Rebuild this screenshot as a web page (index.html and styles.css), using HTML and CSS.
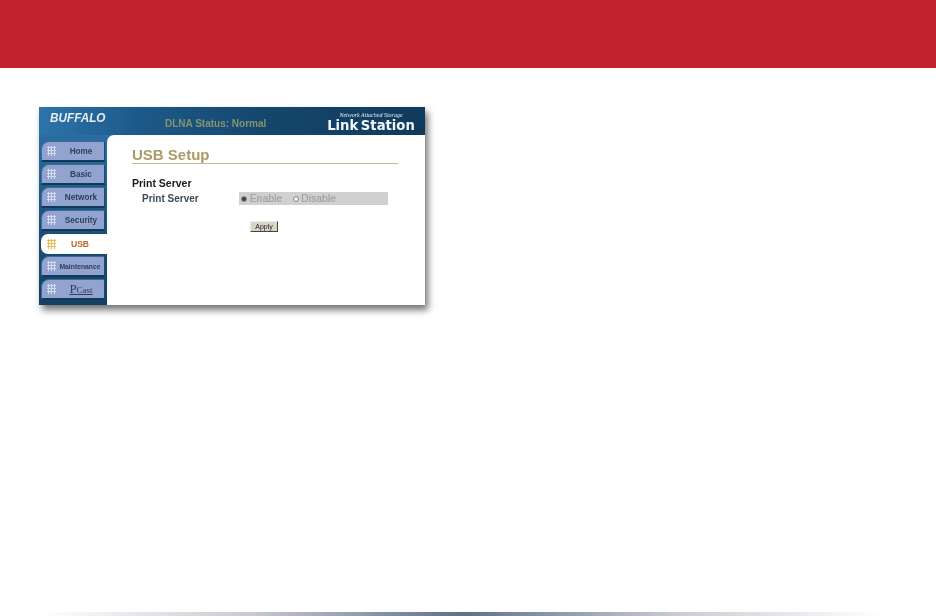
FILE: index.html
```html
<!DOCTYPE html>
<html lang="en">
<head>
<meta charset="utf-8">
<title>USB Setup</title>
<link rel="stylesheet" href="styles.css">
</head>
<body>
<div class="band"></div>
<main class="main">
  <div class="shot">
    <header class="top">
      <div class="logo"><span class="logo-text">BUFFALO</span></div>
      <div class="status">DLNA Status: Normal</div>
      <div class="brand">
        <span class="brand-sub">Network Attached Storage</span>
        <span class="brand-name">Link Station</span>
      </div>
    </header>
    <div class="body">
      <nav class="side">
        <a class="tab"><span class="dots"></span><span class="lbl">Home</span></a>
        <a class="tab"><span class="dots"></span><span class="lbl">Basic</span></a>
        <a class="tab"><span class="dots"></span><span class="lbl">Network</span></a>
        <a class="tab"><span class="dots"></span><span class="lbl">Security</span></a>
        <a class="tab active"><span class="dots"></span><span class="lbl">USB</span></a>
        <a class="tab"><span class="dots"></span><span class="lbl small">Maintenance</span></a>
        <a class="tab"><span class="dots"></span><span class="lbl pcast"><span class="pcast-p">P</span>Cast</span></a>
      </nav>
      <section class="content">
        <h1 class="title">USB Setup</h1>
        <h2 class="sub">Print Server</h2>
        <div class="row">
          <span class="rowlbl">Print Server</span>
          <div class="opts">
            <span class="radio on"></span><span class="opt">Enable</span>
            <span class="radio second"></span><span class="opt">Disable</span>
          </div>
        </div>
        <div class="apply"><span class="btn">Apply</span></div>
      </section>
    </div>
  </div>
</main>
<div class="foot"></div>
</body>
</html>
```
FILE: styles.css
```css
html, body { margin: 0; padding: 0; background: #fff; }
body { width: 936px; height: 616px; overflow: hidden; display: flex; flex-direction: column; font-family: "Liberation Sans", Arial, sans-serif; }
.band { height: 68px; background: #c2222d; flex: none; }
.main { flex: 1; padding: 39px 0 0 39px; }
.shot { width: 386px; height: 198px; display: flex; flex-direction: column; box-shadow: 3px 5px 7px rgba(0,0,0,.55); filter: blur(.45px); background: #14466c; }
.top { height: 28px; flex: none; display: flex; align-items: center; background: linear-gradient(90deg, #2e74aa 0%, #1d5a8a 25%, #14466c 60%, #103a5c 100%); color: #fff; }
.logo { width: 126px; padding-left: 11px; box-sizing: border-box; margin-top: -8px; }
.logo-text { display: inline-block; font-weight: bold; font-style: italic; font-size: 13.5px; color: #e6eef6; transform: scaleX(.87); transform-origin: left center; }
.status { font-size: 10px; font-weight: bold; color: #87936c; width: 160px; margin-top: 5px; }
.brand { display: flex; flex-direction: column; align-items: center; width: 92px; gap: 1px; margin-top: 1px; }
.brand-sub { font-family: "Liberation Serif", serif; font-style: italic; font-size: 6px; line-height: 7px; color: #e6eef6; }
.brand-name { font-family: "DejaVu Sans", sans-serif; font-size: 13.2px; line-height: 12px; font-weight: bold; word-spacing: -2px; color: #f2f6fa; white-space: nowrap; }
.body { flex: 1; display: flex; min-height: 0; background: linear-gradient(180deg, #2a6ea4 0%, #1c5580 45%, #123f62 100%); }
.side { width: 68px; flex: none; padding: 6px 0 0 2px; box-sizing: border-box; display: flex; flex-direction: column; gap: 2px; }
.tab { height: 21px; width: 64px; box-sizing: border-box; display: flex; align-items: center; background: #93a3cf; border-radius: 8px 2px 0 0; border-bottom: 2px solid #0f3a5a; border-right: 1px solid #1a4c72; border-left: 1px solid #3f6a92; border-top: 1px solid #3f6a92; padding-left: 5px; }
.dots { width: 9px; height: 10px; flex: none; background-image: radial-gradient(circle, #d6dcf0 1.1px, transparent 1.3px); background-size: 3px 3px; }
.lbl { flex: 1; text-align: center; font-size: 8.2px; font-weight: bold; color: #2f4058; padding-left: 2px; }
.lbl.small { font-size: 6.8px; white-space: nowrap; padding-left: 0; }
.lbl.pcast { font-family: "Liberation Serif", serif; font-weight: normal; font-size: 9px; text-decoration: underline; }
.pcast-p { font-size: 13px; }
.tab.active { background: #fff; width: 66px; border: 0; margin-top: 1px; border-radius: 7px 0 0 7px; height: 20px; padding-left: 6px; }
.tab.active .dots { background-image: radial-gradient(circle, #edb84e 1.1px, transparent 1.3px); }
.tab.active .lbl { color: #b9672a; padding: 0 3px 0 0; font-size: 8.6px; }
.content { flex: 1; background: #fff; border-radius: 7px 0 0 0; padding: 11px 27px 0 25px; }
.title { margin: 0; font-size: 15px; line-height: 17px; font-weight: bold; color: #ab9a68; border-bottom: 1px solid #c6b98f; }
.sub { margin: 13px 0 0; font-size: 10.5px; line-height: 12px; font-weight: bold; color: #1a1a1a; }
.row { display: flex; align-items: center; height: 13px; margin-top: 3px; }
.rowlbl { width: 107px; padding-left: 10px; box-sizing: border-box; font-size: 10px; font-weight: bold; color: #3b4a5c; }
.opts { width: 149px; height: 13px; background: #d0d0d0; display: flex; align-items: center; padding-left: 2px; box-sizing: border-box; font-size: 10px; color: #a0a0a0; letter-spacing: .2px; -webkit-text-stroke: .2px #a0a0a0; }
.radio { width: 6px; height: 6px; border-radius: 50%; background: #f0f0f0; border: 1px solid #888; box-sizing: border-box; margin-right: 3px; }
.radio.on { background: #444; }
.radio.second { margin-left: 11px; margin-right: 2px; }
.apply { margin: 16px 0 0 118px; }
.btn { display: block; width: 28px; height: 11px; line-height: 10px; text-align: center; font-size: 7px; color: #222; background: #d8d4c8; border-right: 1px solid #444; border-bottom: 1px solid #444; border-top: 1px solid #eee; border-left: 1px solid #eee; box-sizing: border-box; }
.foot { height: 4px; flex: none; margin: 0 55px 0 42px; background: linear-gradient(90deg, #fff 0%, #c8c9d2 25%, #5d7189 50%, #c8c9d2 75%, #fff 100%); }
```
